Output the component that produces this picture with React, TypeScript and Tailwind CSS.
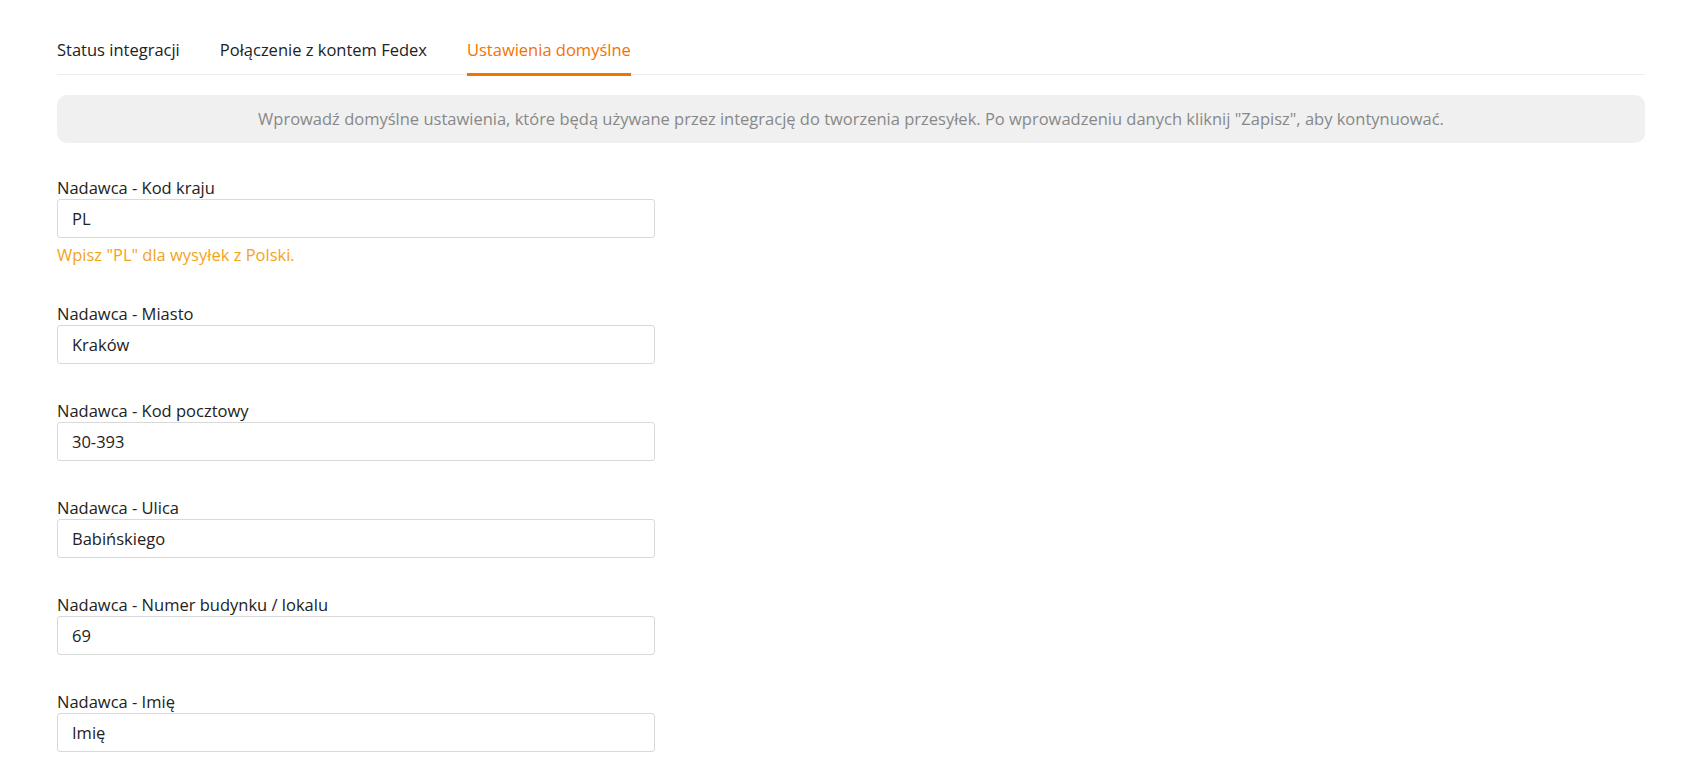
import React from 'react'

const tabs = ['Status integracji', 'Połączenie z kontem Fedex', 'Ustawienia domyślne']

const fields: { label: string; value: string; hint?: string }[] = [
  { label: 'Nadawca - Kod kraju', value: 'PL', hint: 'Wpisz "PL" dla wysyłek z Polski.' },
  { label: 'Nadawca - Miasto', value: 'Kraków' },
  { label: 'Nadawca - Kod pocztowy', value: '30-393' },
  { label: 'Nadawca - Ulica', value: 'Babińskiego' },
  { label: 'Nadawca - Numer budynku / lokalu', value: '69' },
  { label: 'Nadawca - Imię', value: 'Imię' },
]

export default function App() {
  return (
    <div
      className="min-h-screen bg-white pl-[57px] pr-[53px] pt-[38px] text-[16.5px] text-[#222]"
      style={{ fontFamily: '"Open Sans", "Noto Sans", sans-serif' }}
    >
      <nav className="flex gap-[40px] border-b border-[#ececec]">
        {tabs.map((t, i) => (
          <button
            key={t}
            className={
              i === 2
                ? '-mb-[2px] border-b-[3px] border-[#f57200] pb-[11px] leading-6 text-[#f57200]'
                : '-mb-[2px] border-b-[3px] border-transparent pb-[11px] leading-6 text-[#222]'
            }
          >
            {t}
          </button>
        ))}
      </nav>

      <div className="mt-[20px] flex h-[48px] items-center justify-center rounded-[10px] bg-[#f0f0f0] text-[16.5px] text-[#888]">
        Wprowadź domyślne ustawienia, które będą używane przez integrację do tworzenia przesyłek. Po wprowadzeniu danych
        kliknij "Zapisz", aby kontynuować.
      </div>

      <div className="mt-[33px] flex w-[598px] flex-col gap-[35px]">
        {fields.map((f) => (
          <div key={f.label} className="flex flex-col">
            <label className="leading-[23px]">{f.label}</label>
            <input
              readOnly
              value={f.value}
              className="h-[39px] w-full rounded-[3px] border border-[#d9d9d9] bg-white px-[14px] text-[16.5px] text-[#222] outline-none"
            />
            {f.hint && <div className="mt-[5px] leading-6 text-[#f5a31a]">{f.hint}</div>}
          </div>
        ))}
      </div>
    </div>
  )
}
